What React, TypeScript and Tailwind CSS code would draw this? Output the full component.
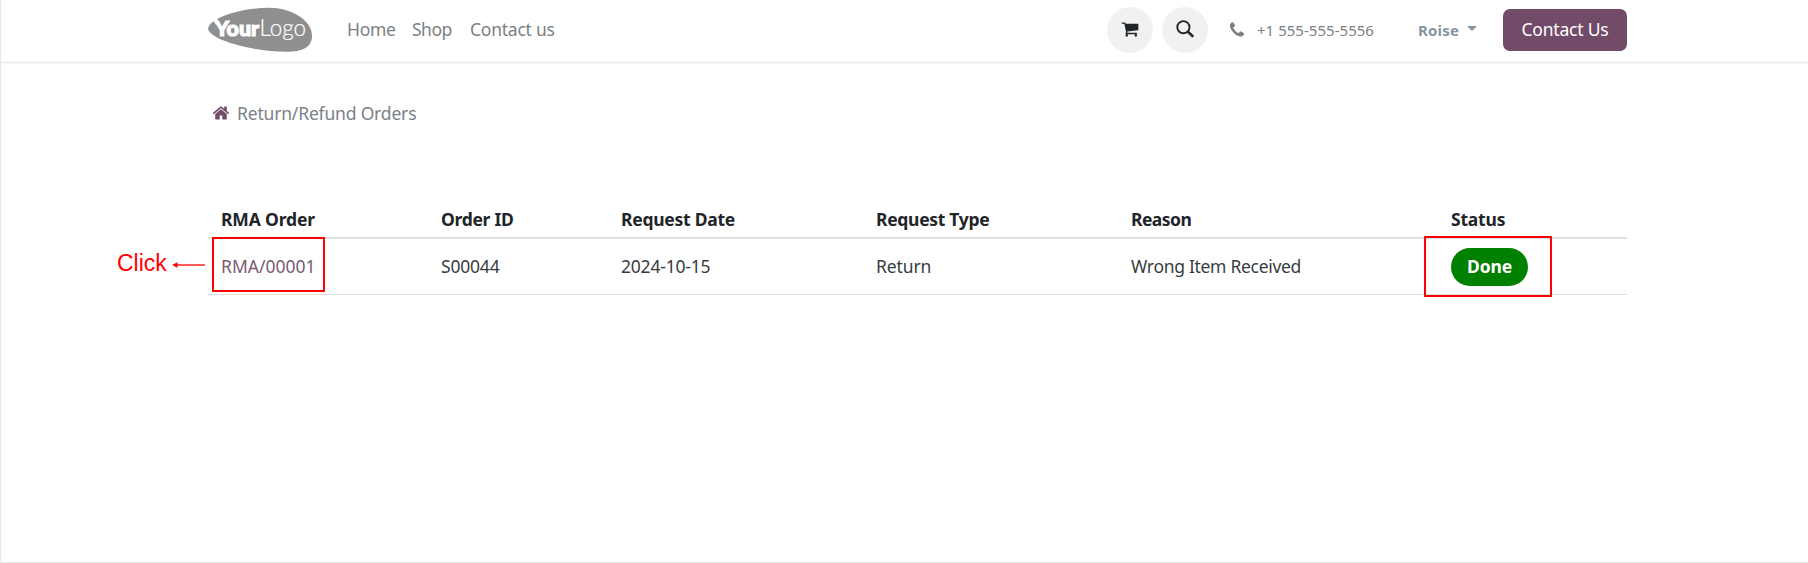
import type { ReactNode } from "react";

const CART =
  "M704 1536q0 52-38 90t-90 38-90-38-38-90 38-90 90-38 90 38 38 90zm896 0q0 52-38 90t-90 38-90-38-38-90 38-90 90-38 90 38 38 90zm128-1088v512q0 24-16.5 42.5t-40.5 21.5l-1044 122q13 60 13 70 0 16-24 64h920q26 0 45 19t19 45-19 45-45 19h-1024q-26 0-45-19t-19-45q0-11 8-31.5t16-36 21.5-40 15.5-29.5l-177-823h-204q-26 0-45-19t-19-45 19-45 45-19h256q16 0 28.5 6.5t19.5 15.5 13 24.5 8 26 5.5 29.5 4.5 26h1201q26 0 45 19t19 45z";
const HOME =
  "M1472 992v480q0 26-19 45t-45 19h-384v-384h-256v384h-384q-26 0-45-19t-19-45v-480q0-1 .5-3t.5-3l575-474 575 474q1 2 1 6zm223-69l-62 74q-8 9-21 11h-3q-13 0-21-7l-692-577-692 577q-12 8-24 7-13-2-21-11l-62-74q-8-10-7-23.5t11-21.5l719-599q32-26 76-26t76 26l244 204v-195q0-14 9-23t23-9h192q14 0 23 9t9 23v408l219 182q10 8 11 21.5t-7 23.5z";
const PHONE =
  "M1600 1240q0 27-10 70.5t-21 68.5q-21 50-122 106-94 51-186 51-27 0-52.5-3.5t-57.5-12.5-47.5-14.5-55.5-20.5-49-18q-98-35-175-83-128-79-264.5-215.5t-215.5-264.5q-48-77-83-175-3-9-18-49t-20.5-55.5-14.5-47.5-12.5-57.5-3.5-52.5q0-92 51-186 56-101 106-122 25-11 68.5-21t70.5-10q14 0 21 3 18 6 53 76 11 19 30 54t35 63.5 31 53.5q3 4 17.5 25t21.5 35.5 7 28.5q0 20-28.5 50t-62 55-62 53-28.5 46q0 9 5 22.5t8.5 20.5 14 24 11.5 19q76 137 174 235t235 174q2 1 19 11.5t24 14 20.5 8.5 22.5 5q18 0 46-28.5t53-62 55-62 50-28.5q14 0 28.5 7t35.5 21.5 25 17.5q25 15 53.5 31t63.5 35 54 30q70 35 76 53 3 7 3 21z";

function Icon({ d, className }: { d: string; className: string }) {
  return (
    <svg viewBox="0 0 1792 1792" fill="currentColor" className={className} aria-hidden="true">
      <path d={d} />
    </svg>
  );
}

function Logo() {
  return (
    <svg viewBox="0 0 104 46" className="h-[46px] w-[104px] shrink-0">
      <path
        d="M0 21.5C2 10 35 .8 60 .8C85 .8 104 14 104 29C104 40 95 44.8 78 44.8C46 44.8 1 33 0 21.5Z"
        fill="#8f8f8f"
      />
      <path d="M4.5 12L9 11.5L12 16L8 17.5Z" fill="#fff" />
      <text x="7" y="28.9" fill="#fff" stroke="#fff" strokeWidth="1.2" fontFamily="Lato, sans-serif" fontWeight="900" fontSize="21.5" textLength="44" lengthAdjust="spacingAndGlyphs">
        Your
      </text>
      <text x="51.5" y="28.9" fill="#fff" stroke="#fff" strokeWidth="0.2" fontFamily="Lato, sans-serif" fontWeight="300" fontSize="23.5" textLength="46.5" lengthAdjust="spacingAndGlyphs">
        Logo
      </text>
    </svg>
  );
}

function Round({ className, children }: { className: string; children: ReactNode }) {
  return (
    <button className={`flex h-[46px] w-[46px] items-center justify-center rounded-full bg-[#f1f1f1] text-[#212529] ${className}`}>
      {children}
    </button>
  );
}

const columns = [
  { label: "RMA Order", width: "w-[220px]", tracking: "tracking-[-0.15px]" },
  { label: "Order ID", width: "w-[180px]", tracking: "tracking-[-0.3px]" },
  { label: "Request Date", width: "w-[255px]", tracking: "tracking-[-0.26px]" },
  { label: "Request Type", width: "w-[255px]", tracking: "tracking-[-0.3px]" },
  { label: "Reason", width: "w-[320px]", tracking: "tracking-[-0.55px]" },
  { label: "Status", width: "w-[189px]", tracking: "tracking-[-0.2px]" },
];

export default function App() {
  return (
    <div className="h-[563px] w-[1808px] overflow-hidden border-b border-l border-[#e6e6e6] bg-white font-['Noto_Sans',sans-serif] text-[17.5px] leading-[26px] text-[#374151]">
      <header className="flex h-[63px] items-center border-b border-[#e9e9e9] pb-[2px] pl-[207px] shadow-[0_1px_1px_rgba(0,0,0,0.04)]">
        <Logo />
        <nav className="ml-[35px] flex w-[760px] pb-[2px] text-[#7b7f83]">
          <a className="w-[65px] tracking-[-0.3px]">Home</a>
          <a className="w-[58px] tracking-[-0.5px]">Shop</a>
          <a className="tracking-[-0.24px]">Contact us</a>
        </nav>
        <Round className="">
          <Icon d={CART} className="-mt-[2px] h-[18px] w-[18px]" />
        </Round>
        <Round className="ml-[9px]">
          <svg viewBox="0 0 18 18" className="-mt-[3px] h-[18px] w-[18px]" fill="none" stroke="currentColor">
            <circle cx="7.4" cy="7.2" r="6.1" strokeWidth="1.9" />
            <path d="M11.7 11.5L17.2 16.8" strokeWidth="2.5" />
          </svg>
        </Round>
        <div className="ml-[20px] flex w-[190px] items-center text-[#7b7f83]">
          <Icon d={PHONE} className="-mt-px h-[18px] w-[18px]" />
          <span className="ml-[11px] text-[15px] tracking-[0.03px]">+1 555-555-5556</span>
        </div>
        <div className="flex w-[85px] items-center text-[#8595a2]">
          <span className="w-[49px] text-[15px] font-bold tracking-[0.2px]">Roise</span>
          <svg viewBox="0 0 10 5" className="-mt-[3px] h-[5px] w-[10px]" fill="currentColor">
            <path d="M0 0H10L5 5Z" />
          </svg>
        </div>
        <button className="flex h-[42px] w-[124px] items-center justify-center rounded-[7px] bg-[#714b67] pb-[2px] tracking-[-0.19px] text-white">
          Contact Us
        </button>
      </header>

      <div className="flex items-center pl-[211px] pt-[37px]">
        <Icon d={HOME} className="h-[18px] w-[18px] text-[#714b67]" />
        <span className="ml-[7px] tracking-[-0.18px] text-[#7a8187]">Return/Refund Orders</span>
      </div>

      <main className="relative ml-[207px] mt-[73px] w-[1419px]">
        <table className="w-full table-fixed border-collapse text-left">
          <thead>
            <tr className="h-[39px] border-b-2 border-[#dedede] text-[#212529]">
              {columns.map((c) => (
                <th key={c.label} className={`px-[13px] pb-0 pt-[2px] font-bold ${c.width} ${c.tracking}`}>
                  {c.label}
                </th>
              ))}
            </tr>
          </thead>
          <tbody>
            <tr className="h-[56px] border-b border-[#dedede] text-[#383c40]">
              <td className="px-[13px] py-0 text-[#7c5a73]">RMA/00001</td>
              <td className="px-[13px] py-0 tracking-[-0.2px]">S00044</td>
              <td className="px-[13px] py-0 tracking-[-0.2px]">2024-10-15</td>
              <td className="px-[13px] py-0 tracking-[-0.1px]">Return</td>
              <td className="px-[13px] py-0 tracking-[-0.3px]">Wrong Item Received</td>
              <td className="px-[13px] pb-0 pt-[2px]">
                <span className="flex h-[38px] w-[77px] items-center justify-center rounded-full bg-[#008000] pb-[2px] font-bold tracking-[-0.2px] text-white">
                  Done
                </span>
              </td>
            </tr>
          </tbody>
        </table>
        <div className="absolute left-[4px] top-[38px] h-[55px] w-[113px] border-2 border-[#ff0000]" />
        <div className="absolute left-[1216px] top-[37px] h-[61px] w-[128px] border-2 border-[#ff0000]" />
        <div className="absolute left-[-91px] top-[51px] flex items-center text-[#ff0000]">
          <span className="font-['Liberation_Sans',sans-serif] text-[23px]">Click</span>
          <svg viewBox="0 0 33 6" className="ml-[5px] mt-[4px] h-[6px] w-[33px]">
            <path d="M4 3H33" stroke="#ff0000" strokeWidth="1.3" />
            <path d="M0 3L5.5 0.3V5.7Z" fill="#ff0000" />
          </svg>
        </div>
      </main>
    </div>
  );
}
